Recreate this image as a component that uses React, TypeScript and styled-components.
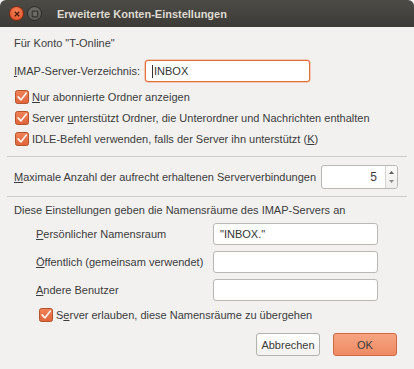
import styled, { createGlobalStyle } from "styled-components";

const Global = createGlobalStyle`
  html, body { margin: 0; padding: 0; background: #f2f1f0; }
  body { font-family: "Liberation Sans", Arial, sans-serif; font-size: 11px; color: #3c3c3c; white-space: nowrap; }
`;

const CheckIcon = () => (
  <svg width="14" height="14" viewBox="0 0 14 14">
    <defs>
      <linearGradient id="cb" x1="0" y1="0" x2="0" y2="1">
        <stop offset="0" stopColor="#f08359" />
        <stop offset="1" stopColor="#e0643a" />
      </linearGradient>
    </defs>
    <rect x="0.5" y="0.5" width="13" height="13" rx="2" fill="url(#cb)" stroke="#b5532c" />
    <path d="M3.2 7 L6 9.8 L11.2 3.2" fill="none" stroke="#fbeee8" strokeWidth="1.8" strokeLinecap="round" strokeLinejoin="round" />
  </svg>
);

const Check = ({ children, indent = 0 }: { children: React.ReactNode; indent?: number }) => (
  <CheckRow $indent={indent}>
    <CheckIcon />
    <span>{children}</span>
  </CheckRow>
);

export default function App() {
  return (
    <Window>
      <Global />
      <TitleBar>
        <WinBtn $close>
          <svg width="8" height="8" viewBox="0 0 8 8">
            <path d="M1.8 1.8 L6.2 6.2 M6.2 1.8 L1.8 6.2" stroke="#4a1c0c" strokeWidth="1.3" />
          </svg>
        </WinBtn>
        <WinBtn>
          <svg width="8" height="8" viewBox="0 0 8 8">
            <rect x="1.2" y="1.2" width="5.6" height="5.6" rx="0.8" fill="none" stroke="#35342f" strokeWidth="1.2" />
          </svg>
        </WinBtn>
        <Title>Erweiterte Konten-Einstellungen</Title>
      </TitleBar>
      <Body>
        <Section>
          <Text>Für Konto "T-Online"</Text>
          <FieldRow>
            <Label>
              <u>I</u>MAP-Server-Verzeichnis:
            </Label>
            <Input $focus>
              <Caret />
              INBOX
            </Input>
          </FieldRow>
          <Checks>
            <Check>
              <u>N</u>ur abonnierte Ordner anzeigen
            </Check>
            <Check>
              Server <u>u</u>nterstützt Ordner, die Unterordner und Nachrichten enthalten
            </Check>
            <Check>
              IDLE-Befehl verwenden, falls der Server ihn unterstützt (<u>K</u>)
            </Check>
          </Checks>
        </Section>
        <Separator $top={9} />
        <SpinRow>
          <Text>
            <u>M</u>aximale Anzahl der aufrecht erhaltenen Serververbindungen
          </Text>
          <Spin>
            <SpinValue>5</SpinValue>
            <SpinArrows>
              <svg width="7" height="22" viewBox="0 0 7 22">
                <path d="M1 8 L3.5 5 L6 8 Z" fill="#5e5e5e" />
                <path d="M1 14 L3.5 17 L6 14 Z" fill="#8a8a8a" />
              </svg>
            </SpinArrows>
          </Spin>
        </SpinRow>
        <Separator $top={7} />
        <Section>
          <Text $top={5}>Diese Einstellungen geben die Namensräume des IMAP-Servers an</Text>
          <NsGrid>
            <Label>
              <u>P</u>ersönlicher Namensraum
            </Label>
            <Input>"INBOX."</Input>
            <Label>
              <u>Ö</u>ffentlich (gemeinsam verwendet)
            </Label>
            <Input />
            <Label>
              <u>A</u>ndere Benutzer
            </Label>
            <Input />
          </NsGrid>
          <Check indent={24}>
            S<u>e</u>rver erlauben, diese Namensräume zu übergehen
          </Check>
        </Section>
        <Buttons>
          <Button>Abbrechen</Button>
          <Button $primary>OK</Button>
        </Buttons>
      </Body>
    </Window>
  );
}

const Window = styled.div`
  width: 414px;
  height: 369px;
  display: flex;
  flex-direction: column;
  background: #f2f1f0;
  overflow: hidden;
`;

const TitleBar = styled.div`
  height: 27px;
  flex: none;
  display: flex;
  align-items: center;
  padding: 0 6px 0 9px;
  gap: 3px;
  background: linear-gradient(#4d4b46, #3c3b37);
  border-radius: 6px 6px 0 0;
`;

const WinBtn = styled.div<{ $close?: boolean }>`
  width: 15px;
  height: 15px;
  border-radius: 50%;
  display: flex;
  align-items: center;
  justify-content: center;
  box-sizing: border-box;
  background: ${(p) =>
    p.$close
      ? "radial-gradient(circle at 50% 35%, #f6845a, #df4a1f)"
      : "radial-gradient(circle at 50% 35%, #75736e, #57554f)"};
  border: 1px solid ${(p) => (p.$close ? "#7e2a0f" : "#2c2b28")};
`;

const Title = styled.div`
  margin-left: 12px;
  color: #dfdbd2;
  font-weight: 700;
  font-size: 11px;
`;

const Body = styled.div`
  flex: 1;
  display: flex;
  flex-direction: column;
  padding: 8px 7px 0 7px;
`;

const Section = styled.div`
  display: flex;
  flex-direction: column;
  padding: 0 7px;
`;

const Text = styled.div<{ $top?: number }>`
  line-height: 16px;
  margin-top: ${(p) => p.$top ?? 0}px;
`;

const Label = styled.div`
  line-height: 16px;
`;

const FieldRow = styled.div`
  display: flex;
  align-items: center;
  margin-top: 9px;
  & > ${Label} {
    width: 131px;
  }
`;

const Input = styled.div<{ $focus?: boolean }>`
  width: 165px;
  height: 22px;
  box-sizing: border-box;
  display: flex;
  align-items: center;
  padding: 0 6px;
  background: #fff;
  border: 1px solid ${(p) => (p.$focus ? "#e0703e" : "#bab8b3")};
  box-shadow: ${(p) => (p.$focus ? "0 0 0 0.5px #f0a07c" : "none")};
  border-radius: 3px;
  color: #333;
`;

const Caret = styled.span`
  display: inline-block;
  width: 1px;
  height: 13px;
  background: #333;
  margin-right: 1px;
`;

const Checks = styled.div`
  display: flex;
  flex-direction: column;
  gap: 5px;
  margin-top: 7px;
`;

const CheckRow = styled.div<{ $indent: number }>`
  display: flex;
  align-items: center;
  gap: 3px;
  height: 16px;
  line-height: 16px;
  padding-left: ${(p) => p.$indent + 1}px;
`;

const Separator = styled.div<{ $top: number }>`
  height: 1px;
  flex: none;
  background: #cdcbc7;
  margin-top: ${(p) => p.$top}px;
`;

const SpinRow = styled.div`
  display: flex;
  align-items: center;
  justify-content: space-between;
  padding: 8px 9px 0 7px;
`;

const Spin = styled.div`
  width: 77px;
  height: 24px;
  display: flex;
  box-sizing: border-box;
  background: #fff;
  border: 1px solid #bab8b3;
  border-radius: 3px;
  overflow: hidden;
`;

const SpinValue = styled.div`
  flex: 1;
  display: flex;
  align-items: center;
  justify-content: flex-end;
  padding-right: 8px;
  font-size: 12px;
`;

const SpinArrows = styled.div`
  width: 11px;
  display: flex;
  align-items: center;
  justify-content: center;
  border-left: 1px solid #d6d4d0;
  background: linear-gradient(#fbfbfa, #efeeec);
`;

const NsGrid = styled.div`
  display: grid;
  grid-template-columns: 177px 165px;
  align-items: center;
  row-gap: 6px;
  padding-left: 22px;
  margin-top: 5px;
  margin-bottom: 6px;
`;

const Buttons = styled.div`
  display: flex;
  justify-content: flex-end;
  gap: 13px;
  padding: 10px 10px 0 0;
`;

const Button = styled.div<{ $primary?: boolean }>`
  width: 64px;
  height: 23px;
  box-sizing: border-box;
  display: flex;
  align-items: center;
  justify-content: center;
  border-radius: 3px;
  border: 1px solid ${(p) => (p.$primary ? "#d06a45" : "#b4b2ad")};
  background: ${(p) => (p.$primary ? "linear-gradient(#f6a582, #ee8962)" : "linear-gradient(#ffffff, #f3f2f1)")};
  color: #3c3c3c;
`;
